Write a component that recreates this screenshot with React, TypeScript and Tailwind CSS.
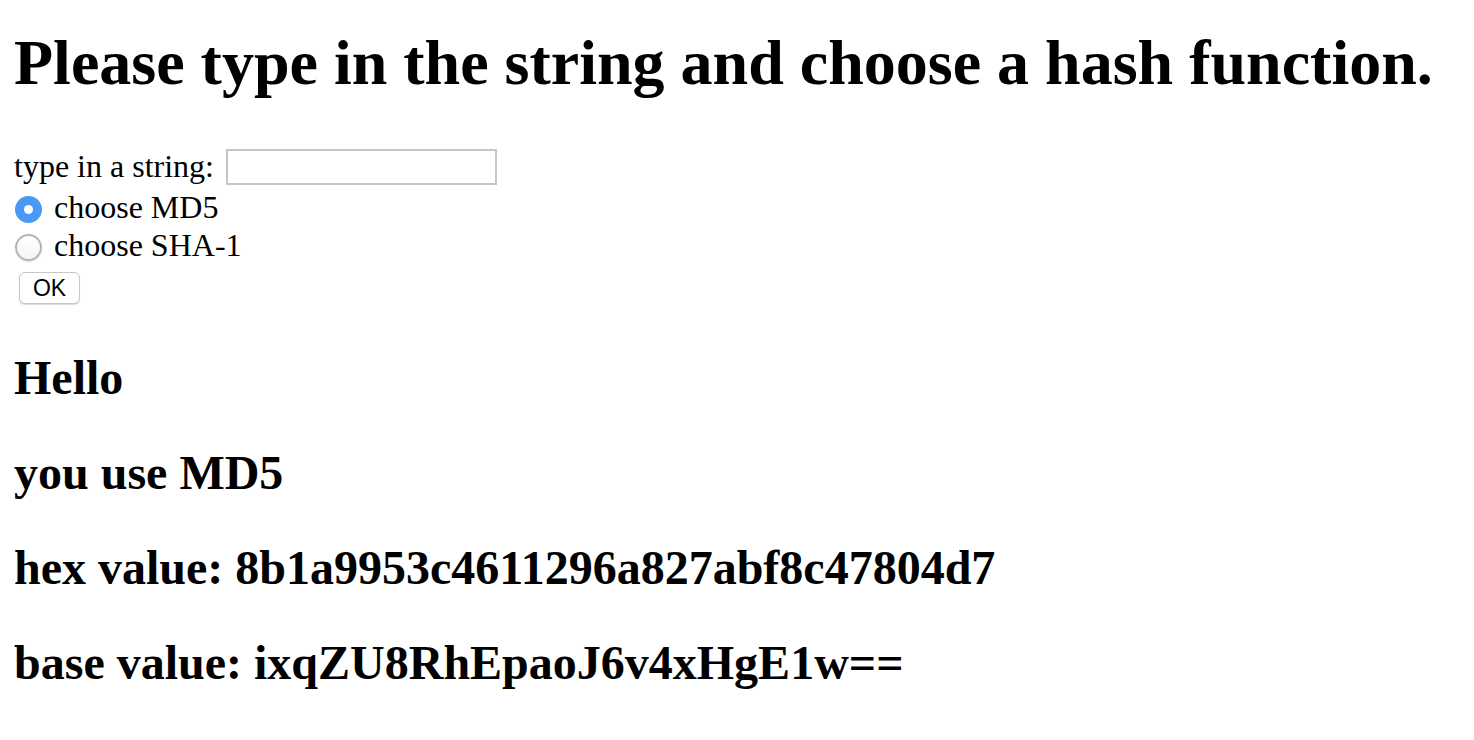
import React from "react";

export default function App() {
  return (
    <div className="min-h-screen bg-white px-[14px] font-['Liberation_Serif','Times_New_Roman',serif] text-black">
      <h1 className="pt-[26px] text-[64px] font-bold leading-[74px] whitespace-nowrap">
        Please type in the string and choose a hash function.
      </h1>

      <form className="mt-[49px]" onSubmit={(e) => e.preventDefault()}>
        <div className="flex items-start">
          <span className="text-[32px] leading-[34px] whitespace-nowrap">type in a string:</span>
          <input
            type="text"
            className="ml-[12px] h-[36px] w-[271px] border-2 border-[#c6c6c6] bg-white outline-none"
          />
        </div>

        <div className="mt-[6px] flex h-[38px] items-start">
          <span className="ml-[1px] mt-[5px] flex h-[27px] w-[27px] items-center justify-center rounded-full bg-[#4a9af5]">
            <span className="h-[9px] w-[9px] rounded-full bg-white" />
          </span>
          <span className="ml-[12px] text-[32px] leading-[32px] whitespace-nowrap">choose MD5</span>
        </div>

        <div className="flex h-[38px] items-start">
          <span className="ml-[1px] mt-[5px] h-[27px] w-[27px] rounded-full border-2 border-[#b4b4b4] bg-gradient-to-b from-white to-[#f4f4f4] shadow-[0_1px_1px_rgba(0,0,0,0.12)]" />
          <span className="ml-[12px] text-[32px] leading-[32px] whitespace-nowrap">choose SHA-1</span>
        </div>

        <button
          type="submit"
          className="ml-[5px] mt-[5px] flex h-[32px] w-[61px] items-center justify-center rounded-[6px] border border-[#c6c6c6] bg-white font-['Liberation_Sans',Arial,sans-serif] text-[23px] leading-none text-black shadow-[0_1px_1px_rgba(0,0,0,0.15)]"
        >
          OK
        </button>
      </form>

      <div className="mt-[46px] flex flex-col gap-[40px]">
        <h2 className="text-[48px] font-bold leading-[55px] whitespace-nowrap">Hello</h2>
        <h2 className="text-[48px] font-bold leading-[55px] whitespace-nowrap">you use MD5</h2>
        <h2 className="text-[48px] font-bold leading-[55px] whitespace-nowrap">
          hex value: 8b1a9953c4611296a827abf8c47804d7
        </h2>
        <h2 className="text-[48px] font-bold leading-[55px] whitespace-nowrap">
          base value: ixqZU8RhEpaoJ6v4xHgE1w==
        </h2>
      </div>
    </div>
  );
}
